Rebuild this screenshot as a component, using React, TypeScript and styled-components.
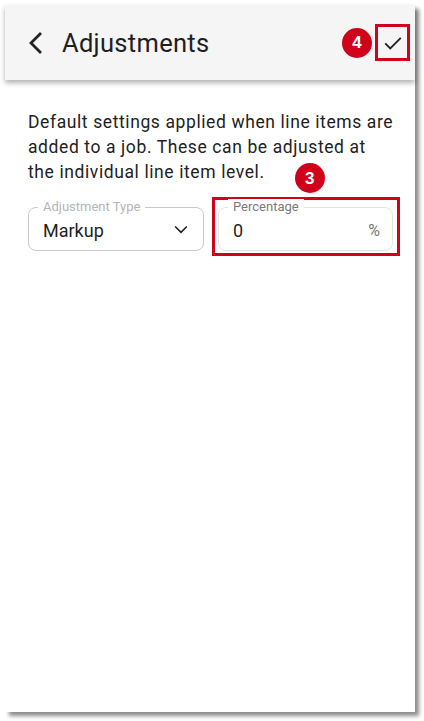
import styled, { createGlobalStyle } from "styled-components"

const red = "#d0021b"

const GlobalStyle = createGlobalStyle`
    html, body {
        margin: 0;
        padding: 0;
        background: #ffffff;
        font-family: Roboto, "Liberation Sans", sans-serif;
    }
`

const Page = styled.div`
    padding: 5px 0 0 5px;
    width: 424px;
    height: 721px;
    box-sizing: border-box;
`

const Phone = styled.div`
    width: 410px;
    height: 707px;
    background: #ffffff;
    box-shadow: 4px 4px 4px rgba(0, 0, 0, 0.45);
    display: flex;
    flex-direction: column;
`

const Header = styled.div`
    height: 75px;
    background: #f5f5f5;
    box-shadow: 0 3px 5px rgba(0, 0, 0, 0.3);
    display: flex;
    align-items: center;
    padding: 0 5px 0 22px;
    position: relative;
    z-index: 1;
`

const Title = styled.h1`
    margin: 0 0 0 17px;
    font-size: 25.5px;
    font-weight: 400;
    color: #1f1f1f;
    flex: 1;
    letter-spacing: 0.3px;
`

const Badge = styled.span`
    width: 30px;
    height: 30px;
    border-radius: 50%;
    background: ${red};
    color: #ffffff;
    font-family: "Liberation Sans", Arial, sans-serif;
    font-size: 17px;
    font-weight: 700;
    display: flex;
    align-items: center;
    justify-content: center;
`

const CheckBox = styled.div`
    width: 35px;
    height: 37px;
    box-sizing: border-box;
    border: 3px solid ${red};
    margin-left: 3px;
    display: flex;
    align-items: center;
    justify-content: center;
`

const Content = styled.div`
    padding: 30px 20px 0 23px;
`

const Intro = styled.p`
    margin: 0;
    font-size: 17.5px;
    line-height: 25px;
    color: #222222;
    letter-spacing: 0.6px;
    position: relative;
`

const IntroBadge = styled.div`
    position: absolute;
    left: 267px;
    top: 53px;
`

const Fields = styled.div`
    display: flex;
    margin-top: 22px;
    align-items: flex-start;
`

const Field = styled.div<{ $light?: boolean }>`
    position: relative;
    flex-shrink: 0;
    width: ${p => (p.$light ? 175 : 176)}px;
    height: 44px;
    box-sizing: border-box;
    border: 1px solid ${p => (p.$light ? "#e3e3e3" : "#c9c9c9")};
    border-radius: 8px;
    display: flex;
    align-items: center;
    padding: 0 12px 0 14px;
`

const Legend = styled.span<{ $dark?: boolean }>`
    position: absolute;
    top: -9px;
    left: 9px;
    padding: 0 5px;
    background: #ffffff;
    font-size: 13px;
    line-height: 16px;
    color: ${p => (p.$dark ? "#7a7a7a" : "#b5b5b5")};
`

const Value = styled.span`
    flex: 1;
    font-size: 18px;
    color: #1f1f1f;
    padding-top: 2px;
`

const Unit = styled.span`
    font-size: 16px;
    color: #777777;
    padding-top: 2px;
`

const Highlight = styled.div`
    flex-shrink: 0;
    margin: -10px 0 0 8px;
    padding: 7px 4px 2px 3px;
    border: 3px solid ${red};
`

export default function App() {
    return (
        <Page>
            <GlobalStyle />
            <Phone>
                <Header>
                    <svg width="18" height="24" viewBox="0 0 18 24">
                        <path d="M14 2 L4 12 L14 22" fill="none" stroke="#222" strokeWidth="2.8" />
                    </svg>
                    <Title>Adjustments</Title>
                    <Badge>4</Badge>
                    <CheckBox>
                        <svg width="22" height="22" viewBox="0 0 24 24">
                            <path d="M3.5 12.5 L9 18 L20.5 6.5" fill="none" stroke="#222" strokeWidth="2" />
                        </svg>
                    </CheckBox>
                </Header>
                <Content>
                    <Intro>
                        Default settings applied when line items are added to a job. These can be adjusted at the individual line item level.
                        <IntroBadge>
                            <Badge>3</Badge>
                        </IntroBadge>
                    </Intro>
                    <Fields>
                        <Field>
                            <Legend>Adjustment Type</Legend>
                            <Value>Markup</Value>
                            <svg width="20" height="20" viewBox="0 0 24 24">
                                <path d="M5 9 L12 16 L19 9" fill="none" stroke="#222" strokeWidth="2" />
                            </svg>
                        </Field>
                        <Highlight>
                            <Field $light>
                                <Legend $dark>Percentage</Legend>
                                <Value>0</Value>
                                <Unit>%</Unit>
                            </Field>
                        </Highlight>
                    </Fields>
                </Content>
            </Phone>
        </Page>
    )
}
